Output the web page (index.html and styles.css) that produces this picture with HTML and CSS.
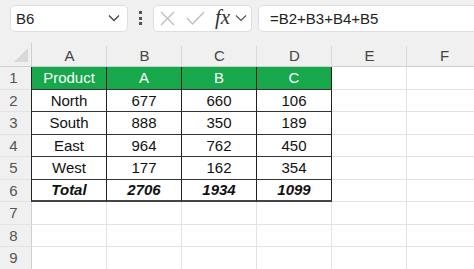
FILE: index.html
```html
<!DOCTYPE html>
<html lang="en">
<head>
  <meta charset="UTF-8">
  <title>Sheet</title>
  <link rel="stylesheet" href="styles.css">
</head>
<body>
  <div class="toolbar">
    <div class="box name-box">
      <span>B6</span>
      <svg class="chev" width="12" height="8" viewBox="0 0 12 8"><path d="M1 1.5 L6 6.5 L11 1.5" fill="none" stroke="#444" stroke-width="1.3"/></svg>
    </div>
    <div class="dots"><i></i><i></i><i></i></div>
    <div class="box fx-box">
      <svg class="ic-x" width="15" height="15" viewBox="0 0 15 15"><path d="M1 1 L14 14 M14 1 L1 14" stroke="#bdbdbd" stroke-width="1.3"/></svg>
      <svg class="ic-ok" width="19" height="14" viewBox="0 0 19 14"><path d="M1 7 L6.5 13 L18 1" fill="none" stroke="#bdbdbd" stroke-width="1.3"/></svg>
      <span class="fx">fx</span>
      <svg class="ic-more" width="12" height="8" viewBox="0 0 12 8"><path d="M1 1.5 L6 6.5 L11 1.5" fill="none" stroke="#555" stroke-width="1.2"/></svg>
    </div>
    <div class="box formula">=B2+B3+B4+B5</div>
  </div>

  <div class="sheet">
    <div class="row head">
      <div class="corner"><i></i></div>
      <div class="col">A</div><div class="col">B</div><div class="col">C</div>
      <div class="col">D</div><div class="col">E</div><div class="col">F</div>
    </div>
    <div class="row">
      <div class="rh">1</div>
      <div class="c t th first">Product</div><div class="c t th">A</div><div class="c t th">B</div><div class="c t th">C</div>
      <div class="c"></div><div class="c"></div>
    </div>
    <div class="row">
      <div class="rh">2</div>
      <div class="c t first">North</div><div class="c t">677</div><div class="c t">660</div><div class="c t">106</div>
      <div class="c"></div><div class="c"></div>
    </div>
    <div class="row">
      <div class="rh">3</div>
      <div class="c t first">South</div><div class="c t">888</div><div class="c t">350</div><div class="c t">189</div>
      <div class="c"></div><div class="c"></div>
    </div>
    <div class="row">
      <div class="rh">4</div>
      <div class="c t first">East</div><div class="c t">964</div><div class="c t">762</div><div class="c t">450</div>
      <div class="c"></div><div class="c"></div>
    </div>
    <div class="row">
      <div class="rh">5</div>
      <div class="c t first">West</div><div class="c t">177</div><div class="c t">162</div><div class="c t">354</div>
      <div class="c"></div><div class="c"></div>
    </div>
    <div class="row">
      <div class="rh">6</div>
      <div class="c t total first">Total</div><div class="c t total">2706</div><div class="c t total">1934</div><div class="c t total">1099</div>
      <div class="c"></div><div class="c"></div>
    </div>
    <div class="row">
      <div class="rh">7</div>
      <div class="c"></div><div class="c"></div><div class="c"></div><div class="c"></div><div class="c"></div><div class="c"></div>
    </div>
    <div class="row">
      <div class="rh">8</div>
      <div class="c"></div><div class="c"></div><div class="c"></div><div class="c"></div><div class="c"></div><div class="c"></div>
    </div>
    <div class="row">
      <div class="rh">9</div>
      <div class="c"></div><div class="c"></div><div class="c"></div><div class="c"></div><div class="c"></div><div class="c"></div>
    </div>
  </div>
</body>
</html>
```

FILE: styles.css
```css
* {
  box-sizing: border-box;
}

body {
  margin: 0;
  width: 474px;
  height: 269px;
  overflow: hidden;
  background: #fff;
  font-family: 'Liberation Sans', Arial, sans-serif;
  color: #111;
}

.toolbar {
  display: flex;
  align-items: center;
  height: 43px;
  padding: 0 0 7px 10px;
  background: #f0f0f0;
}

.box {
  height: 27px;
  background: #fff;
  border: 1px solid #dedede;
  border-radius: 5px;
  display: flex;
  align-items: center;
}

.name-box {
  width: 118px;
  padding: 0 7px 0 5px;
  justify-content: space-between;
  font-size: 15px;
  color: #222;
}

.dots {
  width: 25px;
  display: flex;
  flex-direction: column;
  align-items: center;
  gap: 2.5px;
}

.dots i {
  width: 3px;
  height: 3px;
  background: #555;
}

.fx-box {
  width: 99px;
  padding: 0 0 0 6px;
}

.ic-ok {
  margin-left: 11px;
}

.fx {
  font-family: 'Liberation Serif', serif;
  font-style: italic;
  font-size: 21px;
  color: #333;
  margin: -2px 0 0 10px;
}

.ic-more {
  margin-left: 5px;
}

.formula {
  flex: 1;
  margin: 0 -6px 0 6px;
  padding-left: 11px;
  font-size: 15px;
  color: #222;
}

.row {
  display: flex;
  height: 22.5px;
}

.row.head {
  height: 24px;
  background: #f0f0f0;
  border-bottom: 1px solid #cfcfcf;
}

.corner {
  width: 32px;
  flex: none;
  display: flex;
  align-items: flex-end;
  justify-content: flex-end;
  padding: 0 3px 4px 0;
  border-right: 1px solid #cfcfcf;
}

.corner i {
  width: 14px;
  height: 14px;
  background: #d9d9d9;
  clip-path: polygon(100% 0, 100% 100%, 0 100%);
}

.col {
  width: 75px;
  flex: none;
  display: flex;
  align-items: center;
  justify-content: center;
  font-size: 15px;
  color: #444;
  padding-top: 2px;
  background: linear-gradient(#d9d9d9, #d9d9d9) right bottom / 1px 20px no-repeat;
}

.rh {
  width: 32px;
  flex: none;
  display: flex;
  align-items: center;
  justify-content: center;
  padding-right: 4px;
  background: #f0f0f0;
  border-right: 1px solid #cfcfcf;
  border-bottom: 1px solid #e3e3e3;
  font-size: 15px;
  color: #555;
}

.c {
  width: 75px;
  flex: none;
  border-right: 1px solid #e3e3e3;
  border-bottom: 1px solid #e3e3e3;
  display: flex;
  align-items: center;
  justify-content: center;
  font-size: 15px;
}

.c.t {
  border-right-color: #222;
  border-bottom-color: #333;
}

.c.first {
  border-left: 1px solid #222;
  margin-left: -1px;
  width: 76px;
}

.c.th {
  background: #16a84a;
  color: #fff;
}

.c.total {
  font-weight: bold;
  font-style: italic;
  border-bottom: 2px solid #444;
}
```
